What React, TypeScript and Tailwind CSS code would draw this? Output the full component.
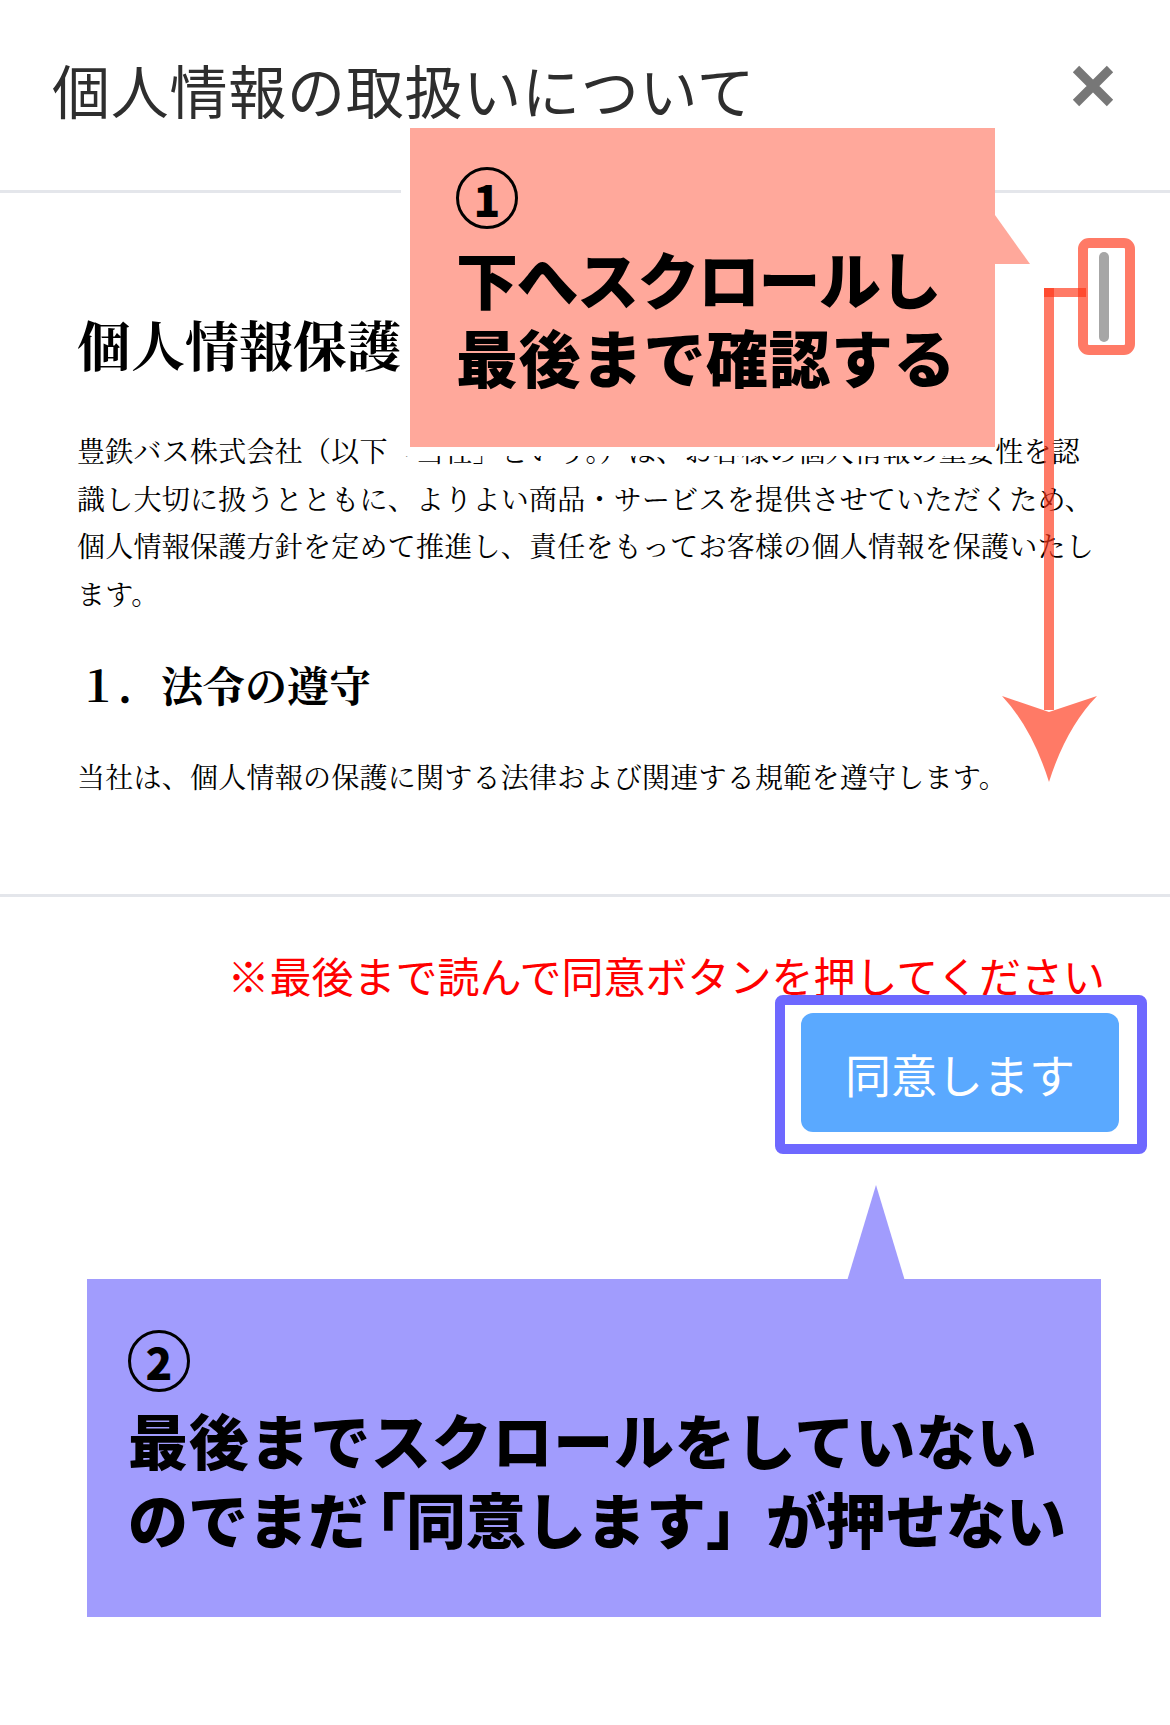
import React from "react";

const SANS = "font-['Noto_Sans_CJK_JP','Noto_Sans_CJK_SC',sans-serif]";
const SERIF = "font-['Noto_Serif_CJK_JP','Liberation_Serif','Noto_Sans_CJK_JP',serif]";

function CloseIcon() {
  return (
    <svg width="42" height="42" viewBox="0 0 42 42" aria-hidden="true">
      <path d="M4 4 L38 38 M38 4 L4 38" stroke="#777777" strokeWidth="9" fill="none" />
    </svg>
  );
}

function Circled({ n }: { n: string }) {
  return (
    <span
      className={`inline-flex h-[62px] w-[62px] items-center justify-center rounded-full border-[3px] border-black text-[44px] font-black leading-none text-black ${SANS}`}
    >
      {n}
    </span>
  );
}

function ScrollHint() {
  // scrollbar frame, connector and down arrow drawn as translucent strokes
  const c = "rgb(255,50,20)";
  const o = 0.65;
  return (
    <svg
      className="absolute left-[990px] top-[230px]"
      width="150"
      height="560"
      viewBox="990 230 150 560"
      aria-hidden="true"
    >
      <rect x="1099" y="252" width="10" height="90" rx="5" fill="#a6a6a6" />
      <rect x="1083" y="243" width="47" height="107" rx="6" fill="none" stroke={c} strokeOpacity={o} strokeWidth="10" />
      <rect x="1044" y="288" width="42" height="9" fill={c} fillOpacity={o} />
      <rect x="1044" y="288" width="10" height="422" fill={c} fillOpacity={o} />
      <path
        d="M1002 696 L1049 712 L1097 696 Q1066 728 1049 782 Q1032 728 1002 696 Z"
        fill={c}
        fillOpacity={o}
      />
    </svg>
  );
}

export default function App() {
  return (
    <div className="relative h-[1725px] w-[1170px] overflow-hidden bg-white">
      {/* modal */}
      <div className="w-[1170px] rounded-[12px] bg-white">
        <header className="flex h-[190px] items-start justify-between pl-[52px] pr-[56px] pt-[60px]">
          <h1 className={`text-[58px] font-normal leading-none tracking-[0.75px] text-[#2e2e2e] ${SANS}`}>
            個人情報の取扱いについて
          </h1>
          <button className="mt-[5px]" aria-label="閉じる">
            <CloseIcon />
          </button>
        </header>

        <div className="h-[707px] overflow-hidden border-y-[3px] border-[#e4e6eb] pl-[77px] pt-[124px] text-black">
          <h2 className={`text-[54px] font-bold leading-none ${SERIF}`}>個人情報保護方針</h2>
          <p className={`mt-[56px] w-[1020px] text-[28px] leading-[47.5px] tracking-[0.25px] ${SERIF}`}>
            豊鉄バス株式会社（以下「当社」という。）は、お客様の個人情報の重要性を認識し大切に扱うとともに、よりよい商品・サービスを提供させていただくため、個人情報保護方針を定めて推進し、責任をもってお客様の個人情報を保護いたします。
          </p>
          <h3 className={`mt-[46px] text-[42px] font-bold leading-none ${SERIF}`}>１．法令の遵守</h3>
          <p className={`mt-[48px] w-[1020px] text-[28px] leading-[47.5px] tracking-[0.25px] ${SERIF}`}>
            当社は、個人情報の保護に関する法律および関連する規範を遵守します。
          </p>
        </div>

        <footer className="flex flex-col items-end pb-[40px] pr-[51px] pt-[57px]">
          <p className={`mr-[14px] text-[42px] leading-none text-[#ff0000] ${SANS}`}>
            ※最後まで読んで同意ボタンを押してください
          </p>
          <div className="relative mt-[17px]">
            <button
              className={`flex h-[119px] w-[318px] items-center justify-center rounded-[12px] bg-[#5aa9ff] text-[46px] font-normal leading-none text-white ${SANS}`}
            >
              同意します
            </button>
            <div className="pointer-events-none absolute -bottom-[22px] -left-[26px] -right-[28px] -top-[18px] rounded-[8px] border-[10px] border-[#6e68ff]" />
          </div>
        </footer>
      </div>

      {/* callout ① */}
      <div className="absolute left-[410px] top-[128px] h-[319px] w-[585px] bg-[#ffa89b] pl-[46px] pt-[39px] shadow-[-9px_0_0_0_#ffffff,0_9px_0_0_#ffffff,-9px_9px_0_0_#ffffff]">
        <Circled n="1" />
        <div className={`mt-[10px] text-[62px] font-black leading-[78px] text-black ${SANS}`}>
          <div className="tracking-[-1.5px]">下へスクロールし</div>
          <div className="tracking-[0.5px]">最後まで確認する</div>
        </div>
      </div>
      <svg className="absolute left-[990px] top-[205px]" width="45" height="62" viewBox="990 205 45 62" aria-hidden="true">
        <polygon points="990,208 1030,264 990,264" fill="#ffa89b" />
      </svg>

      <ScrollHint />

      {/* callout ② */}
      <svg className="absolute left-[840px] top-[1180px]" width="72" height="102" viewBox="840 1180 72 102" aria-hidden="true">
        <polygon points="847,1281 876,1185 905,1281" fill="#a19cfd" />
      </svg>
      <div className="absolute left-[87px] top-[1279px] h-[338px] w-[1014px] bg-[#a19cfd] pl-[41px] pt-[51px]">
        <Circled n="2" />
        <div className={`mt-[7px] text-[60px] font-black leading-[79px] text-black ${SANS}`}>
          <div className="tracking-[0.75px]">最後までスクロールをしていない</div>
          <div>
            のでまだ<span className="ml-[8px] [font-feature-settings:'halt']">「</span>同意します」が押せない
          </div>
        </div>
      </div>
    </div>
  );
}
